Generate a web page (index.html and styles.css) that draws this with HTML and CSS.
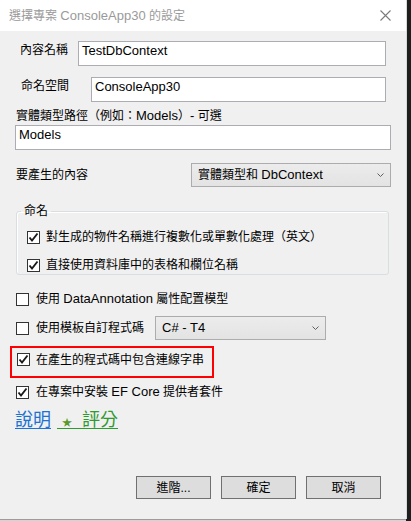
FILE: index.html
```html
<!DOCTYPE html>
<html lang="zh-Hant">
<head>
<meta charset="utf-8">
<title>選擇專案 ConsoleApp30 的設定</title>
<link rel="stylesheet" href="styles.css">
</head>
<body>
<div class="window">
  <div class="titlebar">
    <span class="title">選擇專案 <span class="en">ConsoleApp30</span> 的設定</span>
    <svg class="close" width="11" height="11" viewBox="0 0 11 11"><path d="M0.5 0.5 L10.5 10.5 M10.5 0.5 L0.5 10.5" stroke="#7a7a7a" stroke-width="1.1" fill="none"/></svg>
  </div>
  <div class="content">
    <div class="row field-row row-name">
      <span class="lbl">內容名稱</span>
      <div class="textbox tb-name">TestDbContext</div>
    </div>
    <div class="row field-row row-ns">
      <span class="lbl">命名空間</span>
      <div class="textbox tb-ns">ConsoleApp30</div>
    </div>
    <div class="path-label">實體類型路徑（例如：<span class="en">Models</span>）<span class="en">-</span> 可選</div>
    <div class="textbox tb-path">Models</div>
    <div class="row row-gen">
      <span class="lbl">要產生的內容</span>
      <div class="combo combo-gen">
        <span>實體類型和 <span class="en">DbContext</span></span>
        <svg class="chev" width="7" height="4" viewBox="0 0 7 4"><path d="M0.5 0.5 L3.5 3.5 L6.5 0.5" stroke="#606060" fill="none"/></svg>
      </div>
    </div>
    <fieldset class="group">
      <legend>命名</legend>
      <div class="check">
        <span class="cb"><svg width="11" height="11" viewBox="0 0 11 11"><path d="M1.5 5.5 L4 8.5 L9.5 1.5" stroke="#1a1a1a" stroke-width="1.9" fill="none"/></svg></span>
        <span>對生成的物件名稱進行複數化或單數化處理（英文）</span>
      </div>
      <div class="check">
        <span class="cb"><svg width="11" height="11" viewBox="0 0 11 11"><path d="M1.5 5.5 L4 8.5 L9.5 1.5" stroke="#1a1a1a" stroke-width="1.9" fill="none"/></svg></span>
        <span>直接使用資料庫中的表格和欄位名稱</span>
      </div>
    </fieldset>
    <div class="check outer row-dataann">
      <span class="cb"></span>
      <span>使用 <span class="en">DataAnnotation</span> 屬性配置模型</span>
    </div>
    <div class="row row-tpl">
      <div class="check outer">
        <span class="cb"></span>
        <span>使用模板自訂程式碼</span>
      </div>
      <div class="combo combo-tpl">
        <span class="en">C# - T4</span>
        <svg class="chev" width="7" height="4" viewBox="0 0 7 4"><path d="M0.5 0.5 L3.5 3.5 L6.5 0.5" stroke="#606060" fill="none"/></svg>
      </div>
    </div>
    <div class="highlight">
      <div class="check">
        <span class="cb"><svg width="11" height="11" viewBox="0 0 11 11"><path d="M1.5 5.5 L4 8.5 L9.5 1.5" stroke="#1a1a1a" stroke-width="1.9" fill="none"/></svg></span>
        <span>在產生的程式碼中包含連線字串</span>
      </div>
    </div>
    <div class="check outer row-ef">
      <span class="cb"><svg width="11" height="11" viewBox="0 0 11 11"><path d="M1.5 5.5 L4 8.5 L9.5 1.5" stroke="#1a1a1a" stroke-width="1.9" fill="none"/></svg></span>
      <span>在專案中安裝 <span class="en">EF Core</span> 提供者套件</span>
    </div>
    <div class="links">
      <a class="help" href="#">說明</a>
      <a class="rate" href="#">&nbsp;<span class="star">★</span>&nbsp;&nbsp;評分</a>
    </div>
  </div>
  <div class="footer">
    <button class="btn">進階...</button>
    <button class="btn">確定</button>
    <button class="btn">取消</button>
  </div>
</div>
</body>
</html>
```
FILE: styles.css
```css
html, body {
  margin: 0;
  padding: 0;
}
body {
  width: 411px;
  height: 521px;
  overflow: hidden;
  background: #1e1e1e;
  font-family: "Liberation Sans", "Noto Sans CJK TC", sans-serif;
  font-size: 12px;
  line-height: 16px;
  color: #000;
}
.en {
  font-size: 13px;
}
.window {
  width: 406px;
  height: 519px;
  background: #f0f0f0;
  display: flex;
  flex-direction: column;
  box-shadow: 0 1px 0 #9c9c9c, 0 2px 0 #d4d4d4, 1px 0 0 #d9d9d9;
}
.titlebar {
  height: 31px;
  flex: none;
  background: #fff;
  display: flex;
  align-items: center;
  justify-content: space-between;
  padding: 0 15px 0 9px;
  color: #9a9a9a;
}
.title {
  line-height: 16px;
}
.close {
  display: block;
}
.content {
  display: flex;
  flex-direction: column;
  align-items: flex-start;
}
.row {
  display: flex;
}
.field-row {
  height: 25px;
  align-items: flex-start;
}
.lbl {
  flex: none;
}
.field-row .lbl {
  margin-top: 1px;
}
.textbox {
  box-sizing: border-box;
  height: 25px;
  background: #fff;
  border: 1px solid #abadb3;
  padding: 1px 3px 0;
  font-size: 13px;
  line-height: 15px;
}
.row-name {
  margin-top: 10px;
  padding-left: 20px;
}
.row-name .lbl {
  width: 58px;
}
.tb-name {
  width: 308px;
}
.row-ns {
  margin-top: 11px;
  padding-left: 21px;
}
.row-ns .lbl {
  width: 70px;
}
.tb-ns {
  width: 295px;
}
.path-label {
  margin: 6px 0 0 16px;
}
.tb-path {
  margin: 1px 0 0 15px;
  width: 376px;
}
.row-gen {
  margin-top: 13px;
  padding-left: 16px;
  height: 24px;
  align-items: center;
}
.row-gen .lbl {
  width: 175px;
}
.combo {
  box-sizing: border-box;
  height: 24px;
  border: 1px solid #acacac;
  background: linear-gradient(#ececec, #e3e3e3);
  display: flex;
  align-items: center;
  justify-content: space-between;
  padding: 0 6px 0 6px;
}
.chev {
  display: block;
}
.combo-gen {
  width: 200px;
}
.group {
  margin: 16px 0 0 16px;
  width: 373px;
  min-width: 0;
  box-sizing: border-box;
  border: 1px solid #d9dee2;
  border-radius: 3px;
  box-shadow: inset 1px 1px 0 #fff;
  padding: 10px 0 1px 4px;
}
.group legend {
  padding: 0 3px;
  line-height: 16px;
}
.check {
  display: flex;
  align-items: center;
  height: 16px;
  line-height: 16px;
}
.group .check {
  margin-left: 6px;
}
.group .check + .check {
  margin-top: 12px;
}
.cb {
  flex: none;
  width: 13px;
  height: 13px;
  box-sizing: border-box;
  border: 1px solid #333;
  background: #fff;
  margin-right: 6px;
  display: flex;
  align-items: center;
  justify-content: center;
}
.cb svg {
  display: block;
}
.outer .cb {
  margin-right: 7px;
}
.row-dataann {
  margin: 16px 0 0 16px;
}
.row-tpl {
  margin: 9px 0 0 16px;
  height: 24px;
  align-items: center;
}
.combo-tpl {
  width: 171px;
  margin-left: 11px;
}
.highlight {
  margin: 6px 0 0 10px;
  width: 204px;
  height: 32px;
  box-sizing: border-box;
  border: 2px solid #ff0000;
  padding: 0 0 5px 5px;
  display: flex;
  align-items: center;
}
.row-ef {
  margin: 6px 0 0 16px;
}
.links {
  margin: 9px 0 0 15px;
  display: flex;
  gap: 6px;
  font-size: 18px;
  line-height: 22px;
}
.links a {
  text-decoration: underline;
  text-underline-offset: 2px;
}
.help {
  color: #1c72d4;
}
.rate {
  color: #2f9a2f;
}
.star {
  font-size: 10px;
  color: #5a9a2a;
}
.footer {
  margin-top: auto;
  display: flex;
  justify-content: flex-end;
  gap: 10px;
  padding: 0 25px 20px 0;
}
.btn {
  width: 75px;
  height: 23px;
  box-sizing: border-box;
  background: #dddddd;
  border: 1px solid #707070;
  border-radius: 0;
  padding: 0;
  font-family: "Liberation Sans", "Noto Sans CJK TC", sans-serif;
  font-size: 12px;
  line-height: 16px;
  color: #000;
}
```
